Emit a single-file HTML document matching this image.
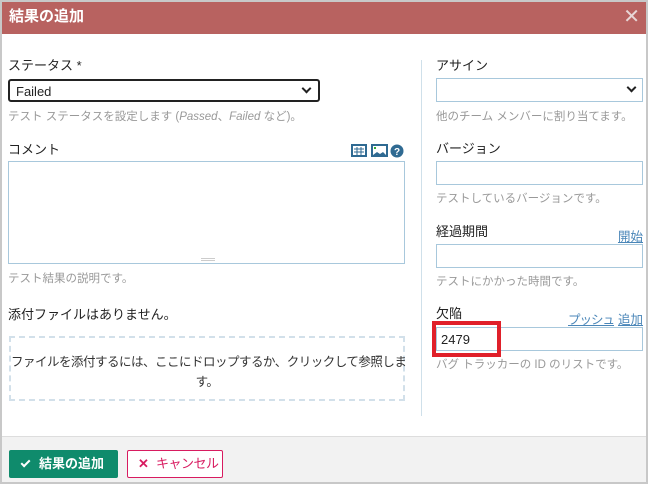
<!DOCTYPE html>
<html><head><meta charset="utf-8"><style>
*{box-sizing:border-box;margin:0;padding:0}
html,body{width:648px;height:484px;overflow:hidden}
body{background:#c8c8c8;font-family:"Liberation Sans","Noto Sans CJK JP",sans-serif;position:relative}
#dlg{position:absolute;left:2px;top:2px;width:644px;height:480px;background:#fff}
.hd{position:absolute;left:0;top:0;width:644px;height:32px;background:#b86260;color:#fff;font-weight:bold;font-size:15px;line-height:30px;padding-left:7px}
.x{position:absolute;right:6px;top:0;color:#e8d6d6;font-size:20px;font-weight:normal}
.a{position:absolute;white-space:nowrap}
.lbl{font-size:13px;color:#222}
.hint{font-size:11.5px;color:#999}
.box{position:absolute;border:1px solid #a8c8dc;background:#fff}
.ft{position:absolute;left:0;top:434px;width:644px;height:46px;background:#f2f2f2;border-top:1px solid #ddd}
a{color:#4a86b8;text-decoration:underline;font-size:12.5px}
.chev{position:absolute;width:7px;height:7px;border-right:2px solid #222;border-bottom:2px solid #222;transform:rotate(45deg)}
</style></head><body>
<div id="dlg">
<div class="hd">結果の追加<span class="x">✕</span></div>

<div class="a lbl" style="left:6px;top:53px">ステータス *</div>
<div class="box" style="left:6px;top:77px;width:312px;height:23px;border:2px solid #222;border-radius:3px;font-size:13px;padding:3px 0 0 6px;color:#222">Failed<div class="chev" style="right:8px;top:4px"></div></div>
<div class="a hint" style="left:6px;top:106px">テスト ステータスを設定します (<i>Passed</i>、<i>Failed</i> など)。</div>

<div class="a lbl" style="left:6px;top:137px">コメント</div>
<svg class="a" style="left:349px;top:141px" width="54" height="15" viewBox="0 0 54 15">
<rect x="1" y="2" width="14" height="11" fill="#fff" stroke="#2f6a92" stroke-width="2"/>
<path d="M3 6h10M3 9h10M6 4v8M10 4v8" stroke="#2f6a92" stroke-width="1"/>
<rect x="21" y="2" width="15" height="11" fill="#fff" stroke="#2f6a92" stroke-width="2"/>
<rect x="23" y="4" width="2" height="2" fill="#3a3"/>
<path d="M22 12l4-3 3 2 3-2 3 3z" fill="#2f6a92"/>
<circle cx="46" cy="8" r="6.5" fill="#2f6a92"/>
<text x="46" y="12" font-size="10" font-weight="bold" fill="#fff" text-anchor="middle" font-family="Liberation Sans">?</text>
</svg>
<div class="box" style="left:6px;top:159px;width:397px;height:103px"><div class="a" style="left:192px;top:96px;width:14px;border-top:1px solid #ccc;height:3px;border-bottom:1px solid #ccc"></div></div>
<div class="a hint" style="left:6px;top:268px">テスト結果の説明です。</div>

<div class="a lbl" style="left:6px;top:302px">添付ファイルはありません。</div>
<div style="position:absolute;left:7px;top:334px;width:396px;height:65px;border:2px dashed #d2e0ea;font-size:12.5px;color:#333;text-align:center;padding:14px 0 0;line-height:20px;letter-spacing:-0.5px"><span style="white-space:nowrap">ファイルを添付するには、ここにドロップするか、クリックして参照しま</span><br>す。</div>

<div class="a" style="left:419px;top:58px;width:1px;height:356px;background:#cfe0ea"></div>

<div class="a lbl" style="left:434px;top:53px">アサイン</div>
<div class="box" style="left:434px;top:76px;width:207px;height:24px"><div class="chev" style="right:7px;top:5px"></div></div>
<div class="a hint" style="left:434px;top:106px">他のチーム メンバーに割り当てます。</div>

<div class="a lbl" style="left:434px;top:136px">バージョン</div>
<div class="box" style="left:434px;top:159px;width:207px;height:24px"></div>
<div class="a hint" style="left:434px;top:188px">テストしているバージョンです。</div>

<div class="a lbl" style="left:434px;top:219px">経過期間</div>
<a class="a" style="right:3px;top:224px">開始</a>
<div class="box" style="left:434px;top:242px;width:207px;height:24px"></div>
<div class="a hint" style="left:434px;top:271px">テストにかかった時間です。</div>

<div class="a lbl" style="left:434px;top:301px">欠陥</div>
<a class="a" style="left:566px;top:307px;letter-spacing:-1px">プッシュ</a><a class="a" style="right:3px;top:307px">追加</a>
<div class="box" style="left:434px;top:325px;width:207px;height:24px"></div>
<div class="a" style="left:430px;top:319px;width:69px;height:36px;border:4px solid #e0202a"></div>
<div class="a" style="left:439px;top:330px;font-size:13px;color:#222">2479</div>
<div class="a hint" style="left:434px;top:354px">バグ トラッカーの ID のリストです。</div>

<div class="ft">
<div class="a" style="left:7px;top:13px;width:109px;height:28px;background:#0f8b6c;border-radius:2px;color:#fff;font-weight:bold;font-size:13px;line-height:27px;padding-left:30px">結果の追加
<div class="a" style="left:14px;top:8px;width:5px;height:9px;border-right:2px solid #fff;border-bottom:2px solid #fff;transform:rotate(45deg)"></div></div>
<div class="a" style="left:125px;top:13px;width:96px;height:28px;background:#fff;border:1px solid #d81b60;border-radius:2px;color:#d81b60;font-size:13px;line-height:26px;padding-left:28px;letter-spacing:-0.5px"><span class="a" style="left:10px;top:0;font-weight:bold">✕</span>キャンセル</div>
</div>
</div>
</body></html>
